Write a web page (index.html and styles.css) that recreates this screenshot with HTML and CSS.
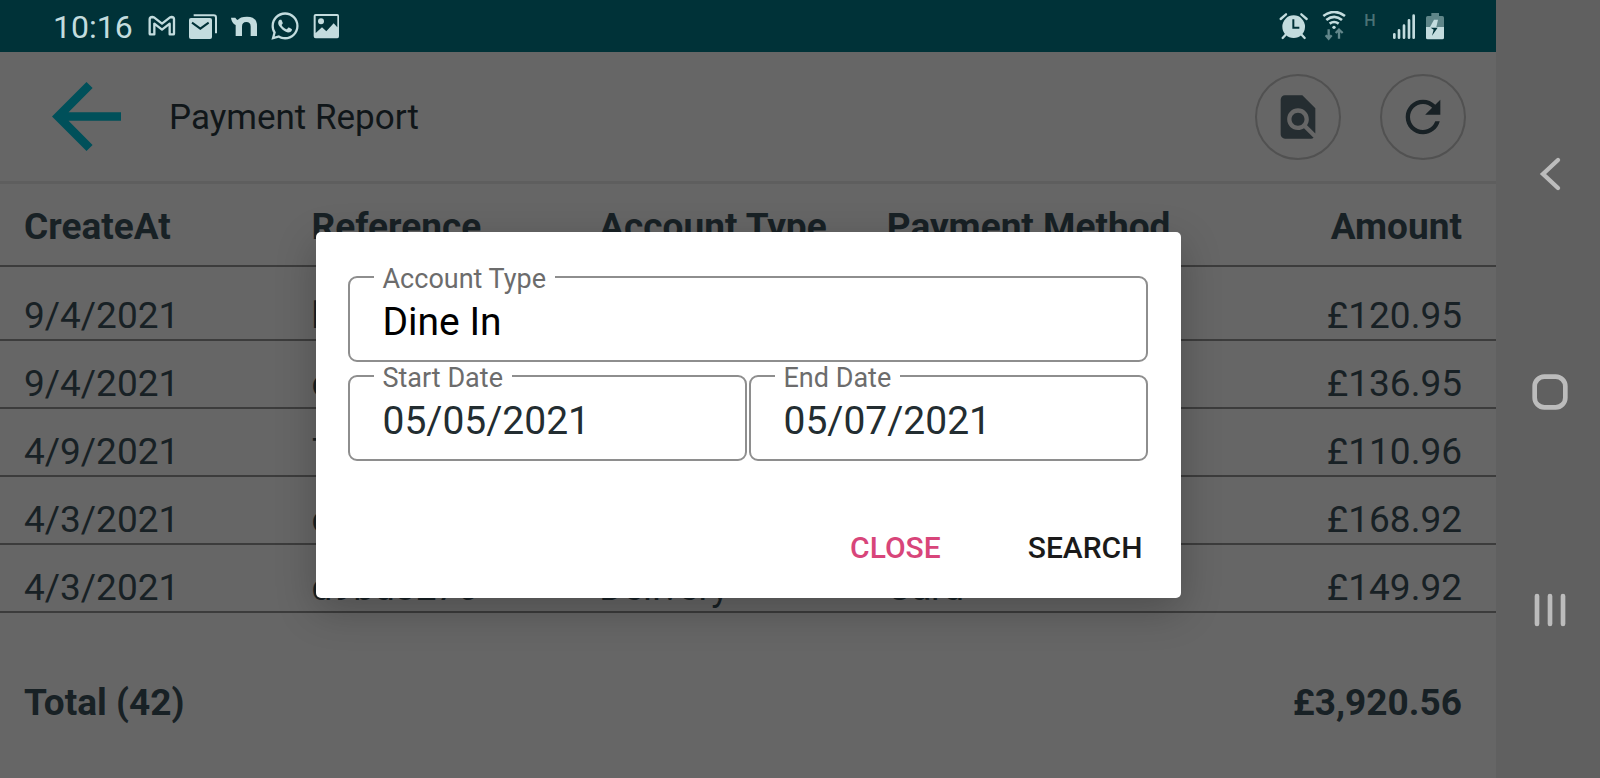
FILE: index.html
```html
<!DOCTYPE html>
<html lang="en">
<head>
<meta charset="utf-8">
<meta name="viewport" content="width=device-width, initial-scale=1">
<title>Payment Report</title>
<link rel="stylesheet" href="styles.css">
</head>
<body>
<div class="screen">
  <div class="app">
    <div class="status-bar">
      <div class="status-left">
        <span class="clock">10:16</span>
        <div class="notifications">
          <svg width="28" height="30" viewBox="444 33 84 90" fill="none" stroke="currentColor" stroke-width="7" stroke-linejoin="round"><path d="M449 101V58q0-7 8-7l5 1 24 19 24-19 5-1q7 0 7 7v43q0 2-2 2h-11V71l-23 18-23-18v32h-12q-2 0-2-2z"/></svg>
          <svg width="30" height="30" viewBox="564 33 90 90" fill="none"><path d="M581 46h60q7 0 7 7v47" stroke="currentColor" stroke-width="6"/><rect x="567" y="54" width="69" height="63" rx="6" fill="currentColor"/><path d="M576 68l25 18 25-18" stroke="#003238" stroke-width="6"/></svg>
          <svg width="28" height="30" viewBox="690 33 84 90" fill="currentColor"><path d="M693 53h13q3 6 7 7 7-10 28-10 30 0 30 28v30h-19V80q0-14-13-14t-13 14v28h-19V75q-12-5-14-22z"/></svg>
          <svg width="30" height="30" viewBox="1 1 22 22" fill="currentColor"><path d="M12.04 2c-5.46 0-9.91 4.45-9.91 9.91 0 1.75.46 3.45 1.32 4.95L2.05 22l5.25-1.38c1.45.79 3.08 1.21 4.74 1.21 5.46 0 9.91-4.45 9.91-9.91 0-2.65-1.03-5.14-2.9-7.01A9.816 9.816 0 0 0 12.04 2m.01 1.67c2.2 0 4.26.86 5.82 2.42a8.225 8.225 0 0 1 2.41 5.83c0 4.54-3.7 8.23-8.24 8.23-1.48 0-2.93-.39-4.19-1.15l-.3-.17-3.12.82.83-3.04-.2-.32a8.188 8.188 0 0 1-1.26-4.38c.01-4.54 3.7-8.24 8.25-8.24M8.53 7.33c-.16 0-.43.06-.66.31-.22.25-.87.86-.87 2.07 0 1.22.89 2.39 1 2.56.14.17 1.76 2.67 4.25 3.73.59.27 1.05.42 1.41.53.59.19 1.13.16 1.56.1.48-.07 1.46-.6 1.67-1.18.21-.58.21-1.07.15-1.18-.07-.1-.23-.16-.48-.27-.25-.14-1.47-.74-1.69-.82-.23-.08-.37-.12-.56.12-.16.25-.64.81-.78.97-.15.17-.29.19-.53.07-.26-.13-1.06-.39-2-1.23-.74-.66-1.23-1.47-1.38-1.72-.12-.24-.01-.39.11-.5.11-.11.27-.29.37-.44.13-.14.17-.25.25-.41.08-.17.04-.31-.02-.43-.06-.11-.56-1.35-.77-1.84-.2-.48-.4-.42-.56-.43-.14 0-.3-.01-.47-.01z"/></svg>
          <svg width="28" height="30" viewBox="936 33 84 90" fill="currentColor"><path fill-rule="evenodd" d="M947 42h65q5 0 5 5v62q0 6-5 6h-65q-6 0-6-6V47q0-5 6-5zm0 6v51l19-17 13 12 22-24 11 12V48z"/><circle cx="963" cy="64" r="9"/></svg>
        </div>
      </div>
      <div class="status-right">
        <svg width="30" height="30" viewBox="117 33 90 90" fill="currentColor"><circle cx="161" cy="80" r="34"/><path d="M122 57l16-14M200 57l-16-14M137 104l-9 10M185 104l9 10" stroke="currentColor" stroke-width="7" stroke-linecap="round"/><path d="M160 58v25h18" fill="none" stroke="#003238" stroke-width="6"/></svg>
        <svg width="36" height="30" viewBox="231 33 108 90" fill="none" stroke="currentColor"><path d="M250 48q33-24 65 0M259 60q24-19 47 0M269 71q13-10 27 0" stroke-width="8"/><circle cx="282" cy="82" r="5" fill="currentColor" stroke="none"/><path d="M266 88v26M257 106l9 10 9-10M297 116V90M287 99l10-10 11 10" stroke-width="7" opacity=".5"/></svg>
        <span class="network">H</span>
        <svg width="30" height="30" viewBox="441 33 90 90" stroke="currentColor" stroke-width="8" stroke-linecap="round"><path d="M463 103v10M477 91v22M492 77v36M507 61v52M521 47v66"/></svg>
        <svg width="20" height="30" viewBox="555 33 60 90"><path d="M574 39h23v9h10q5 0 5 5v28h-54V53q0-5 5-5h11z" fill="#5f8689"/><path d="M558 81h54v32q0 5-5 5h-44q-5 0-5-5z" fill="currentColor"/><path d="M582 59h12l-5 22h-19z" fill="currentColor"/><path d="M572 83h21l-17 24 5-18z" fill="#003238"/></svg>
      </div>
    </div>

    <header class="app-bar">
      <button class="back" type="button" aria-label="Back"><svg width="69" height="69" viewBox="4 4 16 16" fill="currentColor"><path d="M20 11H7.83l5.59-5.59L12 4l-8 8 8 8 1.41-1.41L7.83 13H20z"/></svg></button>
      <h1 class="title">Payment Report</h1>
      <div class="tools">
        <button class="round" type="button" aria-label="Find"><svg class="find" width="52" height="52" viewBox="0 0 24 24" fill="currentColor"><path d="M20 19.59V8l-6-6H6c-1.1 0-1.99.9-1.99 2L4 20c0 1.1.89 2 1.99 2H18c.45 0 .85-.15 1.19-.4l-4.43-4.43c-.8.52-1.74.83-2.76.83-2.76 0-5-2.24-5-5s2.24-5 5-5 5 2.24 5 5c0 1.02-.31 1.96-.83 2.75L20 19.59zM9 13c0 1.66 1.34 3 3 3s3-1.34 3-3-1.34-3-3-3-3 1.34-3 3z"/></svg></button>
        <button class="round" type="button" aria-label="Refresh"><svg width="52" height="52" viewBox="0 0 24 24" fill="currentColor"><path d="M17.65 6.35C16.2 4.9 14.21 4 12 4c-4.42 0-7.99 3.58-7.99 8s3.57 8 7.99 8c3.73 0 6.84-2.55 7.73-6h-2.08c-.82 2.33-3.04 4-5.65 4-3.31 0-6-2.69-6-6s2.69-6 6-6c1.66 0 3.14.69 4.22 1.78L13 11h7V4l-2.35 2.35z"/></svg></button>
      </div>
    </header>

    <main class="report">
      <table class="payments">
        <thead>
          <tr><th>CreateAt</th><th>Reference</th><th>Account Type</th><th>Payment Method</th><th>Amount</th></tr>
        </thead>
        <tbody>
          <tr><td>9/4/2021</td><td>b</td><td></td><td></td><td>£120.95</td></tr>
          <tr><td>9/4/2021</td><td>c</td><td></td><td></td><td>£136.95</td></tr>
          <tr><td>4/9/2021</td><td>7</td><td></td><td></td><td>£110.96</td></tr>
          <tr><td>4/3/2021</td><td>c</td><td></td><td></td><td>£168.92</td></tr>
          <tr><td>4/3/2021</td><td>d9bd3276</td><td>Delivery</td><td>Card</td><td>£149.92</td></tr>
        </tbody>
        <tfoot>
          <tr><th>Total (42)</th><td>£3,920.56</td></tr>
        </tfoot>
      </table>
    </main>

    <div class="overlay">
      <form class="dialog" role="dialog" aria-label="Search payments">
        <fieldset class="field">
          <legend><label for="account">Account Type</label></legend>
          <select class="value account" id="account"><option>Dine In</option></select>
        </fieldset>
        <div class="dates">
          <fieldset class="field">
            <legend><label for="start">Start Date</label></legend>
            <input class="value" id="start" type="text" value="05/05/2021">
          </fieldset>
          <fieldset class="field">
            <legend><label for="end">End Date</label></legend>
            <input class="value" id="end" type="text" value="05/07/2021">
          </fieldset>
        </div>
        <div class="actions">
          <button class="action close" type="button">CLOSE</button>
          <button class="action" type="button">SEARCH</button>
        </div>
      </form>
    </div>
  </div>

  <nav class="system-nav">
    <button type="button" aria-label="Back"><svg width="36" height="36" viewBox="0 0 108 108" fill="none" stroke="currentColor" stroke-width="13" stroke-linecap="round"><path d="M78 12L33 54l45 42"/></svg></button>
    <button type="button" aria-label="Home"><svg width="36" height="36" viewBox="0 0 108 108" fill="none" stroke="currentColor" stroke-width="14"><rect x="8" y="8" width="92" height="92" rx="29"/></svg></button>
    <button type="button" aria-label="Recent apps"><svg width="36" height="36" viewBox="0 0 108 108" stroke="currentColor" stroke-width="14" stroke-linecap="round"><path d="M15 12v84M54 12v84M93 12v84"/></svg></button>
  </nav>
</div>
</body>
</html>
```
FILE: styles.css
```css
* {
  box-sizing: border-box;
}

body {
  margin: 0;
  background: #666666;
  color: #182125;
  font-family: Roboto, "Liberation Sans", sans-serif;
  font-size: 37px;
}

button {
  padding: 0;
  border: 0;
  background: none;
  color: inherit;
  font: inherit;
  cursor: pointer;
}

svg {
  display: block;
}

.screen {
  display: flex;
  min-height: 100vh;
}

.app {
  position: relative;
  display: flex;
  flex: 1;
  flex-direction: column;
}

/* Status bar */

.status-bar {
  display: flex;
  justify-content: space-between;
  align-items: center;
  height: 52px;
  padding: 0 51px 0 53px;
  background: #003238;
  color: #c3dcde;
}

.status-left,
.notifications,
.status-right {
  display: flex;
  align-items: center;
}

.status-left {
  gap: 15px;
}

.notifications {
  gap: 12px;
}

.status-right {
  gap: 8px;
}

.clock {
  padding-top: 2px;
  font-size: 32px;
  line-height: 50px;
}

.network {
  width: 18px;
  padding-bottom: 12px;
  color: #4a7275;
  font-size: 16px;
  font-weight: 500;
  text-align: center;
}

/* App bar */

.app-bar {
  display: flex;
  align-items: center;
  height: 132px;
  padding: 0 30px 0 52px;
  border-bottom: 3px solid #5e5e5e;
}

.back {
  color: #00505a;
}

.title {
  flex: 1;
  margin: 0 0 0 48px;
  padding-top: 2px;
  color: #101619;
  font-size: 35px;
  font-weight: 400;
}

.tools {
  display: flex;
  gap: 39px;
}

.round {
  display: flex;
  justify-content: center;
  align-items: center;
  width: 86px;
  height: 86px;
  border: 2px solid #515151;
  border-radius: 50%;
}

.find {
  color: #252d31;
}

/* Payments table */

.payments,
.payments thead,
.payments tbody,
.payments tfoot {
  display: block;
}

.payments tr {
  display: grid;
  grid-template-columns: repeat(5, 1fr);
  padding: 0 34px 0 24px;
}

.payments th,
.payments td {
  padding: 0;
  text-align: left;
  white-space: nowrap;
}

.payments th:nth-child(5),
.payments td:last-child {
  text-align: right;
}

.payments thead tr {
  padding-top: 4px;
  border-bottom: 2px solid #3c3c3c;
  line-height: 77px;
}

.payments tbody {
  padding-top: 6px;
}

.payments tbody tr {
  padding-top: 20px;
  border-bottom: 2px solid #3c3c3c;
  line-height: 46px;
}

.payments tfoot tr {
  grid-template-columns: 1fr 1fr;
  padding-top: 60px;
  font-weight: 700;
  line-height: 60px;
}

/* Search dialog */

.overlay {
  position: absolute;
  inset: 52px 0 0;
  display: flex;
  justify-content: center;
  align-items: center;
}

.dialog {
  width: 58%;
  max-width: 865px;
  padding: 31px 33px 20px 32px;
  border-radius: 5px;
  background: #ffffff;
  box-shadow: 0 12px 40px rgba(0, 0, 0, 0.24);
}

.field {
  min-width: 0;
  margin: 0;
  padding: 0 33px 7px;
  border: 2px solid #8e8e8e;
  border-radius: 9px;
}

.field legend {
  margin-left: -9px;
  padding: 4px 9px 0;
  color: #6c6c6c;
  font-size: 27px;
  line-height: 24px;
}

.value {
  display: block;
  width: 100%;
  height: 62px;
  padding: 0;
  border: 0;
  outline: 0;
  appearance: none;
  background: none;
  color: #232d31;
  font: inherit;
  font-size: 39px;
}

.account {
  color: #000000;
}

.dates {
  display: grid;
  grid-template-columns: 1fr 1fr;
  gap: 2px;
}

.actions {
  display: flex;
  justify-content: flex-end;
  gap: 87px;
  padding: 57px 5px 0 0;
}

.action {
  color: #1a1a1a;
  font-size: 30px;
  font-weight: 500;
  line-height: 60px;
}

.close {
  color: #d8457a;
}

/* System navigation */

.system-nav {
  display: flex;
  flex-direction: column;
  justify-content: space-between;
  align-items: center;
  width: 104px;
  padding: 156px 0 150px 3px;
  background: #606060;
  color: #bcbcbc;
}
```
